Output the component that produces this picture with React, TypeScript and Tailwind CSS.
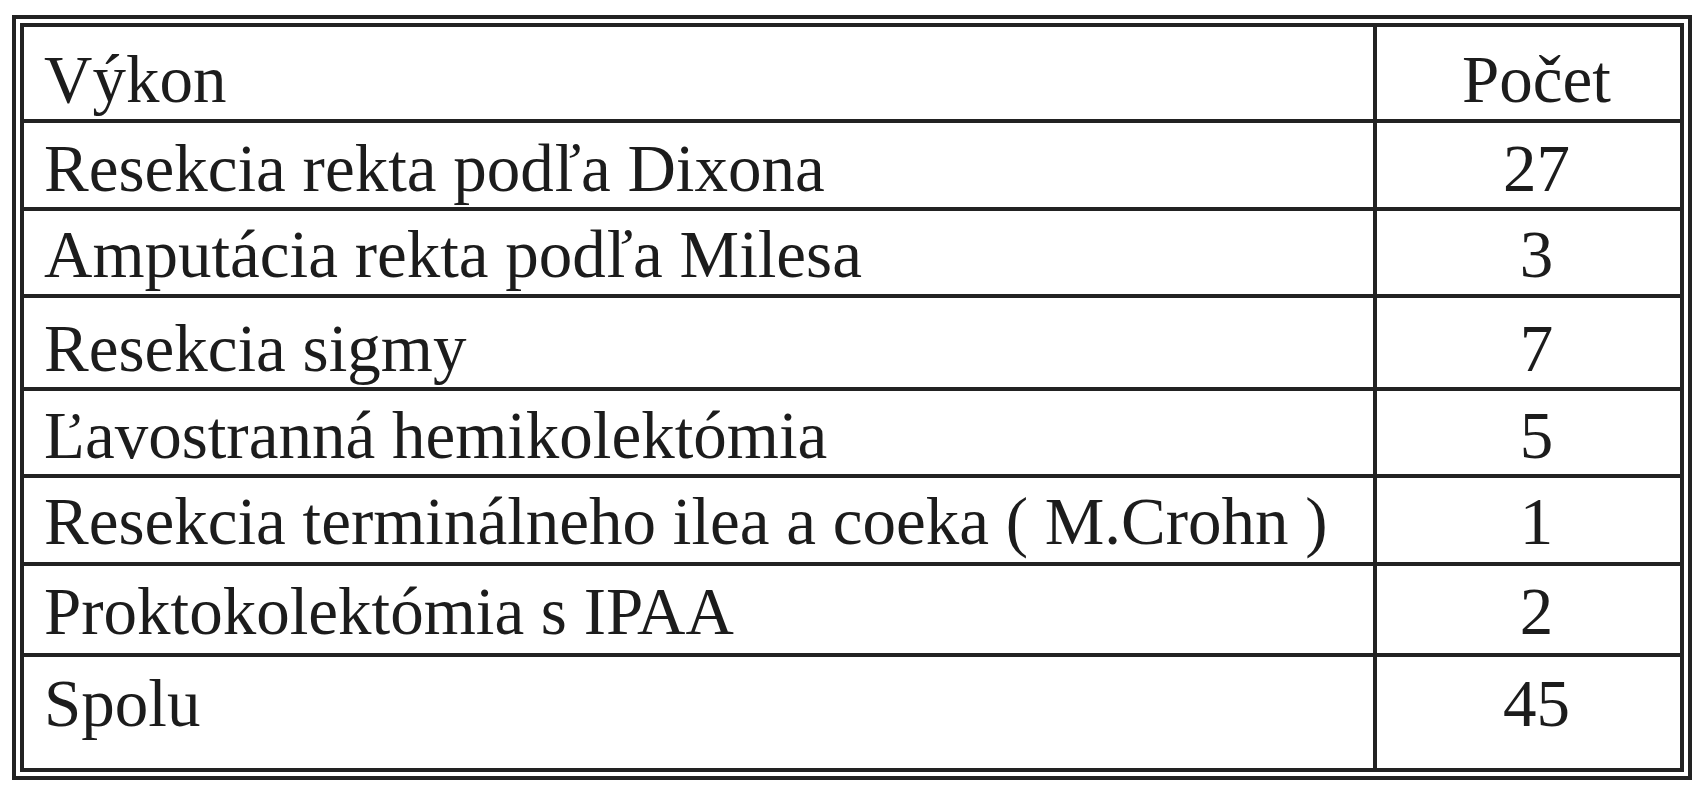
import React from "react";

interface Row {
  label: string;
  count: string;
  rowClass: string;
  padClass: string;
}

// heights and top paddings read off the scan, the row lines are a bit uneven
const rows: Row[] = [
  { label: "Výkon", count: "Počet", rowClass: "h-[92px]", padClass: "pt-[19px]" },
  { label: "Resekcia rekta podľa Dixona", count: "27", rowClass: "h-[88px] border-t-4", padClass: "pt-[12px]" },
  { label: "Amputácia rekta podľa Milesa", count: "3", rowClass: "h-[87px] border-t-4", padClass: "pt-[10px]" },
  { label: "Resekcia sigmy", count: "7", rowClass: "h-[93px] border-t-4", padClass: "pt-[17px]" },
  { label: "Ľavostranná hemikolektómia", count: "5", rowClass: "h-[87px] border-t-4", padClass: "pt-[11px]" },
  { label: "Resekcia terminálneho ilea a coeka ( M.Crohn )", count: "1", rowClass: "h-[88px] border-t-4", padClass: "pt-[10px]" },
  { label: "Proktokolektómia s IPAA", count: "2", rowClass: "h-[91px] border-t-4", padClass: "pt-[12px]" },
  { label: "Spolu", count: "45", rowClass: "flex-1 border-t-4", padClass: "pt-[13px]" },
];

export default function App() {
  return (
    <div className="w-[1707px] h-[800px] bg-white pt-[15px] pl-[12px]">
      <div className="w-[1680px] h-[765px] border-4 border-[#222] p-[4px]">
        <div
          className="h-full border-4 border-[#222] flex flex-col text-[67px] leading-[67px] text-[#1c1c1c]"
          style={{ fontFamily: '"Liberation Serif", "Times New Roman", serif' }}
        >
          {rows.map((row) => (
            <div key={row.label} className={`flex border-[#222] ${row.rowClass}`}>
              <div className={`w-[1353px] border-r-4 border-[#222] pl-[20px] whitespace-nowrap ${row.padClass}`}>
                {row.label}
              </div>
              <div className={`flex-1 text-center pl-[16px] ${row.padClass}`}>{row.count}</div>
            </div>
          ))}
        </div>
      </div>
    </div>
  );
}
